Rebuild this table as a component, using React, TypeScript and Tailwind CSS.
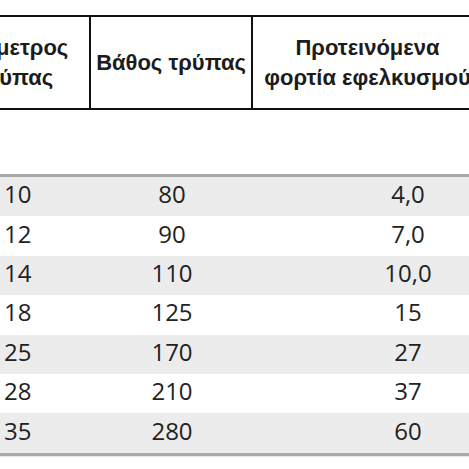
const rows: [string, string, string][] = [
  ["10", "80", "4,0"],
  ["12", "90", "7,0"],
  ["14", "110", "10,0"],
  ["18", "125", "15"],
  ["25", "170", "27"],
  ["28", "210", "37"],
  ["35", "280", "60"],
];

const headFont = { fontFamily: '"Liberation Sans", Arial, sans-serif' };
const bodyFont = { fontFamily: '"Open Sans", "Liberation Sans", sans-serif' };

export default function App() {
  return (
    <div className="h-[469px] w-[469px] overflow-hidden bg-white">
      {/* header table, cut off on both sides */}
      <div
        className="ml-[-62px] mt-[15px] flex h-[95px] w-[546px] border-[2.5px] border-[#111] text-[22px] font-bold leading-[30px] text-[#1c1c1c]"
        style={headFont}
      >
        <div className="flex w-[151px] shrink-0 flex-col items-center justify-center border-r-2 border-[#111] text-center">
          <span>Διάμετρος</span>
          <span>τρύπας</span>
        </div>
        <div className="flex w-[162px] shrink-0 items-center justify-center border-r-2 border-[#111] whitespace-nowrap">
          Βάθος τρύπας
        </div>
        <div className="flex flex-1 flex-col items-center justify-center whitespace-nowrap text-center">
          <span>Προτεινόμενα</span>
          <span>φορτία εφελκυσμού</span>
        </div>
      </div>

      {/* data table */}
      <div
        className="mt-[64px] w-[600px] border-y-[3px] border-[#a9a9a9] text-[24px] text-[#222]"
        style={bodyFont}
      >
        {rows.map(([d, depth, load], i) => (
          <div
            key={d}
            className={`grid h-[39.4px] grid-cols-[90px_164px_308px] items-center pb-[5px] ${i % 2 === 0 ? "bg-[#ececec]" : "bg-white"}`}
          >
            <span className="pl-[4px] leading-none">{d}</span>
            <span className="text-center leading-none">{depth}</span>
            <span className="text-center leading-none">{load}</span>
          </div>
        ))}
      </div>
      <div className="h-px w-full bg-[#e6e6e6]" />
    </div>
  );
}
